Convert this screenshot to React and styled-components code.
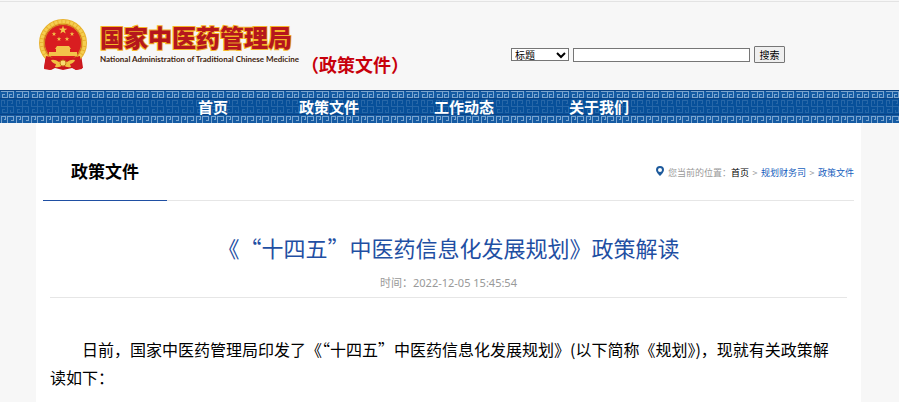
import React from "react";
import styled, { createGlobalStyle } from "styled-components";

const GlobalStyle = createGlobalStyle`
  *, *::before, *::after { box-sizing: border-box; }
  body {
    margin: 0;
    background: #fff;
    color: #000;
    font-family: "Noto Sans", "Noto Sans CJK SC", sans-serif;
    overflow: hidden;
  }
  a { color: inherit; text-decoration: none; }
`;

const Page = styled.div`
  min-height: 100vh;
  margin-right: 4px;
  padding-top: 1px;
  background: #f7f7f7;
  display: flex;
  flex-direction: column;
`;

const Header = styled.header`
  height: 89px;
  border-top: 1px solid #e3e3e3;
  display: flex;
  align-items: flex-start;
  padding: 16px 114px 0 39px;
`;

const Brand = styled.a`
  display: flex;
  gap: 12px;
`;

const BrandText = styled.div`
  display: flex;
  flex-direction: column;
  padding-top: 4px;
`;

const BrandName = styled.span`
  font-family: "Noto Sans CJK SC", sans-serif;
  font-size: 24px;
  line-height: 30px;
  font-weight: 900;
  white-space: nowrap;
  color: #b5161d;
  -webkit-text-stroke: 2px #f5b528;
  paint-order: stroke fill;
`;

const BrandLatin = styled.span`
  font-family: Lato, sans-serif;
  font-size: 8px;
  line-height: 14px;
  font-weight: 700;
  white-space: nowrap;
  color: #3f1d0c;
`;

const Section = styled.span`
  font-family: "Noto Sans CJK SC", sans-serif;
  margin: 33px 0 0 2px;
  font-size: 18px;
  line-height: 26px;
  font-weight: 700;
  color: #c7000b;
  white-space: nowrap;
`;

const Search = styled.form`
  display: flex;
  align-items: center;
  gap: 4px;
  margin: 28px 0 0 auto;
`;

const SelectWrap = styled.label`
  position: relative;
  display: flex;
  svg {
    position: absolute;
    right: 3px;
    top: 4px;
    pointer-events: none;
  }
`;

const Select = styled.select`
  appearance: none;
  width: 58px;
  height: 13px;
  padding: 0 3px;
  border: 1px solid #767676;
  border-radius: 0;
  background: #fff;
  color: #000;
  font: 10px/11px "Noto Sans CJK SC", sans-serif;
`;

const SearchInput = styled.input`
  width: 177px;
  height: 14px;
  padding: 0 2px;
  border: 1px solid #767676;
  background: #fff;
  font: 10px/12px "Noto Sans CJK SC", sans-serif;
`;

const SearchButton = styled.button`
  width: 31px;
  height: 17px;
  padding: 0;
  border: 1px solid #767676;
  border-radius: 1px;
  background: #efefef;
  color: #000;
  font: 10px/13px "Noto Sans CJK SC", sans-serif;
`;

const Nav = styled.nav`
  position: relative;
  height: 33px;
  background: #07509a;
  > svg {
    position: absolute;
    inset: 0;
    width: 100%;
    height: 100%;
  }
`;

const NavList = styled.ul`
  position: relative;
  display: grid;
  grid-template-columns: 101px 135px 135px auto;
  margin: 0;
  padding: 0 0 0 198px;
  list-style: none;
  font: 700 15px/34px "Noto Sans CJK SC", sans-serif;
  color: #fff;
`;

const Main = styled.main`
  flex: 1;
  margin: 0 38px 0 36px;
  padding: 29px 7px 0;
  background: #fff;
`;

const TitleBar = styled.div`
  display: flex;
  justify-content: space-between;
  height: 49px;
  border-bottom: 1px solid #e6e6e6;
`;

const Tab = styled.h2`
  width: 124px;
  height: 49px;
  margin: 0;
  padding-left: 28px;
  border-bottom: 1px solid #1f4fa3;
  font: 700 17px/37px "Noto Sans CJK SC", sans-serif;
`;

const Crumbs = styled.div`
  display: flex;
  align-items: center;
  height: 41px;
  font: 9px/14px "Noto Sans CJK SC", sans-serif;
  color: #999;
  white-space: pre;
  svg { margin: 0 4px 3px 0; }
`;

const Crumb = styled.a`
  && { color: ${(p) => (p.$home ? "#000" : "#1560bd")}; }
`;

const Separator = styled.span`
  width: 12px;
  text-align: center;
`;

const Article = styled.article`
  padding: 0 7px;
`;

const Title = styled.h1`
  margin: 0;
  padding-top: 28px;
  font: 400 22px/36px "Noto Sans CJK SC", sans-serif;
  text-spacing-trim: space-all;
  text-align: center;
  color: #1f4fa3;
`;

const Meta = styled.p`
  margin: 0;
  padding: 9px 0 5px;
  border-bottom: 1px solid #e6e6e6;
  font-size: 11px;
  line-height: 18px;
  text-align: center;
  color: #999;
`;

const Paragraph = styled.p`
  margin: 0;
  padding: 37px 8px 0 0;
  font: 16px/28px "Noto Sans CJK SC", sans-serif;
  text-indent: 2em;
`;

const STAR = "M0-3 .7-1 2.9-.9 1.1.4 1.8 2.4 0 1.2-1.8 2.4-1.1.4-2.9-.9-.7-1Z";

function Emblem() {
  return (
    <svg width="49" height="54" viewBox="0 0 49 54" aria-hidden="true">
      <path d="M7 36 5 50l7 2 4-2 8 2 9-2 4 2 7-2-2-14Z" fill="#c8151b" />
      <circle cx="24" cy="25" r="21.500" fill="#d91d20" stroke="#e8b22f" strokeWidth="5" />
      <circle cx="24" cy="25" r="21.500" fill="none" stroke="#f5ce50" strokeWidth="3" strokeDasharray="3 1" />
      <circle cx="24" cy="25" r="18.500" fill="none" stroke="#d3931f" strokeWidth="1" />
      <g fill="#f3c34a">
        <path d={STAR} transform="translate(24 12) scale(1.500)" />
        <path d={STAR} transform="translate(15 16) scale(.8)" />
        <path d={STAR} transform="translate(33 16) scale(.8)" />
        <path d={STAR} transform="translate(20 21) scale(.8)" />
        <path d={STAR} transform="translate(28 21) scale(.8)" />
        <path d="M18 28h12l2 3H16ZM17 31h14v3h7v4H10v-4h7Z" />
      </g>
      <path d="M7 38q9 3 17 3t17-3l2 13-6 1-4-3H15l-4 3-6-1Z" fill="#cf1a20" />
      <path d="M12 42q4-1 8 2l4-2 4 2q4-3 8-2-1 3-5 4l1 3q-4 1-8-2-4 3-8 2l1-3q-4-1-5-4Z" fill="#f1c142" />
      <circle cx="24" cy="45" r="3" fill="#f9dc70" stroke="#c57a1a" />
    </svg>
  );
}

function Fretwork() {
  return (
    <svg aria-hidden="true">
      <defs>
        <pattern id="fret" width="15" height="33" patternUnits="userSpaceOnUse">
          <rect width="15" height="8" fill="#155ba3" />
          <rect y="25" width="15" height="8" fill="#155ba3" />
          <g fill="none" strokeWidth="1" shapeRendering="crispEdges">
            <path d="M0 .5H15M0 8.500H15M0 24.500H15" stroke="#0a4386" />
            <path d="M.5 1.500H13.500V7.500H9.500V4.500H11.500M7.500 1.500V7.500H2.500V4.500H4.500" stroke="#7ba5cf" />
            <path d="M1.500 33V26.500H5.500V29.500H3.500M7.500 33V26.500H13.500V30.500H10.500" stroke="#7ba5cf" />
            <path d="M7.500 22.500V10.500H12.500V13.500H10.500M7.500 22.500H2.500V19.500H4.500M1.500 16.500H13.500V22.500H10.500V19.500M1.500 16.500V10.500H4.500V13.500" stroke="#2767a8" />
          </g>
        </pattern>
      </defs>
      <rect width="100%" height="100%" fill="url(#fret)" />
    </svg>
  );
}

export default function App() {
  return (
    <Page>
      <GlobalStyle />
      <Header>
        <Brand href="#">
          <Emblem />
          <BrandText>
            <BrandName>国家中医药管理局</BrandName>
            <BrandLatin>National Administration of Traditional Chinese Medicine</BrandLatin>
          </BrandText>
        </Brand>
        <Section>（政策文件）</Section>
        <Search onSubmit={(e) => e.preventDefault()}>
          <SelectWrap>
            <Select aria-label="搜索范围">
              <option>标题</option>
            </Select>
            <svg width="10" height="7" viewBox="0 0 10 7" aria-hidden="true">
              <path d="M1 1l4 4 4-4" fill="none" stroke="#000" strokeWidth="2" />
            </svg>
          </SelectWrap>
          <SearchInput type="text" aria-label="关键词" />
          <SearchButton type="submit">搜索</SearchButton>
        </Search>
      </Header>
      <Nav>
        <Fretwork />
        <NavList>
          {["首页", "政策文件", "工作动态", "关于我们"].map((name) => (
            <li key={name}><a href="#">{name}</a></li>
          ))}
        </NavList>
      </Nav>
      <Main>
        <TitleBar>
          <Tab>政策文件</Tab>
          <Crumbs>
            <svg width="8" height="11" viewBox="0 0 8 11" aria-hidden="true">
              <path fillRule="evenodd" d="M4 0a4 4 0 0 1 4 4c0 2-2.500 4.500-4 6C2.500 8.500 0 6 0 4a4 4 0 0 1 4-4Zm0 2a2 2 0 1 0 0 4 2 2 0 0 0 0-4Z" fill="#1d5a9c" />
            </svg>
            您当前的位置：<Crumb $home href="#">首页</Crumb>
            <Separator>&gt;</Separator>
            <Crumb href="#">规划财务司</Crumb>
            <Separator>&gt;</Separator>
            <Crumb href="#">政策文件</Crumb>
          </Crumbs>
        </TitleBar>
        <Article>
          <Title>《“十四五”中医药信息化发展规划》政策解读</Title>
          <Meta>时间：2022-12-05 15:45:54</Meta>
          <Paragraph>
            日前，国家中医药管理局印发了《“十四五”中医药信息化发展规划》(以下简称《规划》)，现就有关政策解读如下：
          </Paragraph>
        </Article>
      </Main>
    </Page>
  );
}
